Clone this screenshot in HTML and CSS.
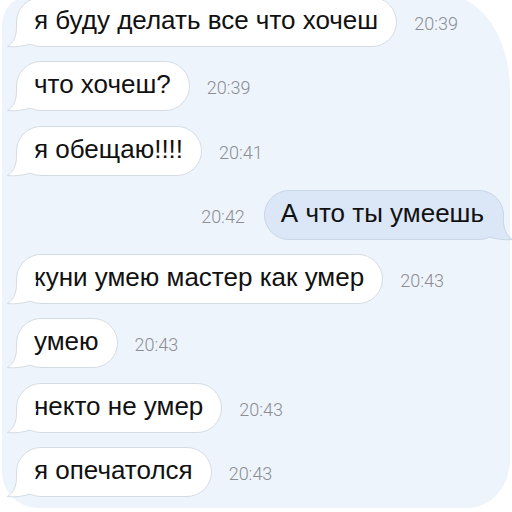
FILE: index.html
```html
<!DOCTYPE html>
<html lang="ru">
<head>
<meta charset="utf-8">
<link rel="stylesheet" href="styles.css">
</head>
<body>
<div class="card">
  <div class="row">
    <div class="bubble">я буду делать все что хочеш<svg class="tail" width="30" height="24" viewBox="0 0 30 24"><path class="tf" d="M9.5 2 C10 14 6 20 0.5 23.5 C8 24.5 17 23 24 21 L30 0 Z"/><path class="ts" d="M9.5 2 C10 14 6 20 0.5 23.5 C8 24.5 17 23 24 21"/></svg></div>
    <span class="time">20:39</span>
  </div>
  <div class="row">
    <div class="bubble">что хочеш?<svg class="tail" width="30" height="24" viewBox="0 0 30 24"><path class="tf" d="M9.5 2 C10 14 6 20 0.5 23.5 C8 24.5 17 23 24 21 L30 0 Z"/><path class="ts" d="M9.5 2 C10 14 6 20 0.5 23.5 C8 24.5 17 23 24 21"/></svg></div>
    <span class="time">20:39</span>
  </div>
  <div class="row">
    <div class="bubble">я обещаю!!!!<svg class="tail" width="30" height="24" viewBox="0 0 30 24"><path class="tf" d="M9.5 2 C10 14 6 20 0.5 23.5 C8 24.5 17 23 24 21 L30 0 Z"/><path class="ts" d="M9.5 2 C10 14 6 20 0.5 23.5 C8 24.5 17 23 24 21"/></svg></div>
    <span class="time">20:41</span>
  </div>
  <div class="row out">
    <span class="time">20:42</span>
    <div class="bubble">А что ты умеешь<svg class="tail" width="30" height="24" viewBox="0 0 30 24"><path class="tf" d="M20.5 2 C20 14 24 20 29.5 23.5 C22 24.5 13 23 6 21 L0 0 Z"/><path class="ts" d="M20.5 2 C20 14 24 20 29.5 23.5 C22 24.5 13 23 6 21"/></svg></div>
  </div>
  <div class="row">
    <div class="bubble">куни умею мастер как умер<svg class="tail" width="30" height="24" viewBox="0 0 30 24"><path class="tf" d="M9.5 2 C10 14 6 20 0.5 23.5 C8 24.5 17 23 24 21 L30 0 Z"/><path class="ts" d="M9.5 2 C10 14 6 20 0.5 23.5 C8 24.5 17 23 24 21"/></svg></div>
    <span class="time">20:43</span>
  </div>
  <div class="row">
    <div class="bubble">умею<svg class="tail" width="30" height="24" viewBox="0 0 30 24"><path class="tf" d="M9.5 2 C10 14 6 20 0.5 23.5 C8 24.5 17 23 24 21 L30 0 Z"/><path class="ts" d="M9.5 2 C10 14 6 20 0.5 23.5 C8 24.5 17 23 24 21"/></svg></div>
    <span class="time">20:43</span>
  </div>
  <div class="row">
    <div class="bubble">некто не умер<svg class="tail" width="30" height="24" viewBox="0 0 30 24"><path class="tf" d="M9.5 2 C10 14 6 20 0.5 23.5 C8 24.5 17 23 24 21 L30 0 Z"/><path class="ts" d="M9.5 2 C10 14 6 20 0.5 23.5 C8 24.5 17 23 24 21"/></svg></div>
    <span class="time">20:43</span>
  </div>
  <div class="row">
    <div class="bubble">я опечатолся<svg class="tail" width="30" height="24" viewBox="0 0 30 24"><path class="tf" d="M9.5 2 C10 14 6 20 0.5 23.5 C8 24.5 17 23 24 21 L30 0 Z"/><path class="ts" d="M9.5 2 C10 14 6 20 0.5 23.5 C8 24.5 17 23 24 21"/></svg></div>
    <span class="time">20:43</span>
  </div>
</div>
</body>
</html>
```

FILE: styles.css
```css
html, body {
  margin: 0;
  padding: 0;
  background: #ffffff;
  width: 512px;
  height: 512px;
  overflow: hidden;
}

.card {
  box-sizing: border-box;
  margin: -5px 0 0 2px;
  width: 508px;
  height: 513px;
  background: #eef4fc;
  border-radius: 30px 65px 42px 36px / 30px 95px 48px 36px;
  padding: 2px 6px 0 14px;
  display: flex;
  flex-direction: column;
  gap: 14.3px;
}

.row {
  display: flex;
  align-items: center;
  height: 50px;
}

.row.out {
  justify-content: flex-end;
}

.bubble {
  position: relative;
  box-sizing: border-box;
  height: 50px;
  padding: 0 18px 3px 17px;
  display: flex;
  align-items: center;
  background: #ffffff;
  border: 1px solid #d6dce3;
  border-radius: 25px;
  font-family: "Liberation Sans", Arial, sans-serif;
  font-size: 26px;
  color: #111111;
  white-space: nowrap;
}

.out .bubble {
  background: #dbe7f6;
  border-color: #c9d6e6;
  padding: 0 19px 3px 16px;
}

.tail {
  position: absolute;
  left: -10px;
  bottom: -1px;
  overflow: visible;
}

.out .tail {
  left: auto;
  right: -10px;
}

.tf {
  fill: #ffffff;
  stroke: none;
}

.ts {
  fill: none;
  stroke: #d6dce3;
  stroke-width: 1;
}

.out .tf {
  fill: #dbe7f6;
}

.out .ts {
  stroke: #c9d6e6;
}

.time {
  font-family: Roboto, "Liberation Sans", sans-serif;
  font-weight: 300;
  font-size: 18px;
  color: #8a8d92;
  margin: 3px 0 0 17px;
}

.out .time {
  margin: 3px 19px 0 0;
}
```
